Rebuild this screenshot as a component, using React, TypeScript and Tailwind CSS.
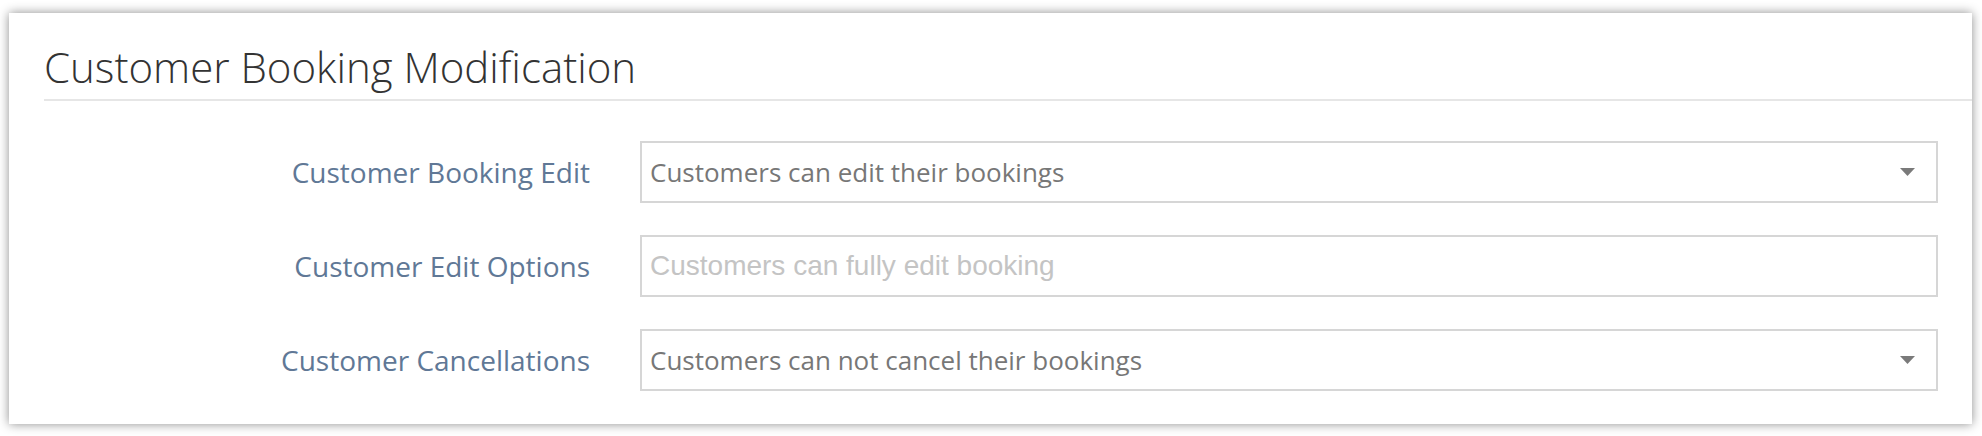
import React from 'react';

const rows = [
  { label: 'Customer Booking Edit', value: 'Customers can edit their bookings', kind: 'select' },
  { label: 'Customer Edit Options', value: 'Customers can fully edit booking', kind: 'input' },
  { label: 'Customer Cancellations', value: 'Customers can not cancel their bookings', kind: 'select' },
];

function Caret() {
  return (
    <svg width="15" height="8" viewBox="0 0 15 8" className="shrink-0">
      <path d="M0 0 H15 L7.5 8 Z" fill="#7a7a7a" />
    </svg>
  );
}

export default function App() {
  return (
    <div className="bg-white pt-[13px] pl-[9px] pr-[10px] pb-[12px]">
      <div className="bg-white h-[411px] shadow-[0_0_10px_rgba(0,0,0,0.45)]">
        <div className="ml-[35px] pt-[33px] pb-[11px] border-b-2 border-[#e6e6e6]">
          <h2 className="text-[42px] leading-[42px] font-light text-[#333] font-['Open_Sans',sans-serif]">
            Customer Booking Modification
          </h2>
        </div>

        <div className="pt-[40px] pr-[34px] flex flex-col gap-[32px]">
          {rows.map((row) => (
            <div key={row.label} className="flex items-center h-[62px]">
              <label className="w-[581px] shrink-0 text-right text-[28px] text-[#607896] font-['Open_Sans',sans-serif]">
                {row.label}
              </label>
              <div className="ml-[50px] flex-1 h-[62px] border-2 border-[#d6d6d6] flex items-center pl-[8px] pr-[21px]">
                {row.kind === 'select' ? (
                  <>
                    <span className="flex-1 text-[26px] text-[#777] font-['Open_Sans',sans-serif]">
                      {row.value}
                    </span>
                    <Caret />
                  </>
                ) : (
                  <input
                    readOnly
                    placeholder={row.value}
                    className="flex-1 outline-none bg-transparent text-[28px] placeholder:text-[#c4c4c4] font-['Liberation_Sans',Arial,sans-serif]"
                  />
                )}
              </div>
            </div>
          ))}
        </div>
      </div>
    </div>
  );
}
